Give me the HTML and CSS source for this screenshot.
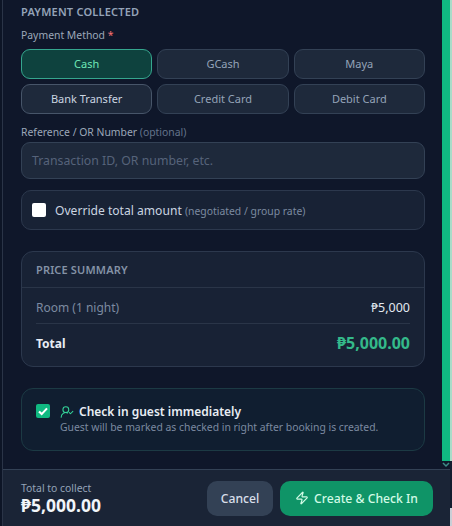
FILE: index.html
```html
<!DOCTYPE html>
<html lang="en">
<head>
<meta charset="utf-8">
<title>Payment</title>
<link rel="stylesheet" href="styles.css">
</head>
<body>
<div class="modal">
  <div class="body">
    <div class="scroll">
      <h3 class="section-title">PAYMENT COLLECTED</h3>
      <div class="label">Payment Method <span class="req">*</span></div>
      <div class="methods">
        <button class="method active">Cash</button>
        <button class="method">GCash</button>
        <button class="method">Maya</button>
        <button class="method strong">Bank Transfer</button>
        <button class="method">Credit Card</button>
        <button class="method">Debit Card</button>
      </div>
      <div class="label ref-label">Reference / OR Number <span class="opt">(optional)</span></div>
      <div class="input">Transaction ID, OR number, etc.</div>
      <div class="override">
        <span class="box"></span>
        <span class="override-text">Override total amount <small>(negotiated / group rate)</small></span>
      </div>
      <div class="summary">
        <div class="summary-head">PRICE SUMMARY</div>
        <div class="summary-body">
          <div class="row room"><span>Room (1 night)</span><span class="val">₱5,000</span></div>
          <div class="row total"><span>Total</span><span class="grand">₱5,000.00</span></div>
        </div>
      </div>
      <div class="checkin">
        <span class="check">
          <svg viewBox="0 0 14 14" width="14" height="14"><path d="M3 7.4l2.7 2.7L11 4.4" fill="none" stroke="#fff" stroke-width="2.1"/></svg>
        </span>
        <div class="checkin-text">
          <div class="checkin-title">
            <svg viewBox="0 0 24 24" width="14" height="14" fill="none" stroke="#34d399" stroke-width="1.8" stroke-linecap="round" stroke-linejoin="round"><path d="M2 21a8 8 0 0 1 11-7.4"/><circle cx="10" cy="8" r="5"/><path d="M16 13l2 2 4-4"/></svg>
            <span>Check in guest immediately</span>
          </div>
          <div class="checkin-sub">Guest will be marked as checked in right after booking is created.</div>
        </div>
      </div>
    </div>
    <div class="scrollbar">
      <div class="thumb"></div>
      <svg class="arrow" viewBox="0 0 8 6" width="8" height="6"><path d="M1 1l3 3 3-3" fill="none" stroke="#3f8a86" stroke-width="1.5"/></svg>
    </div>
  </div>
  <div class="footer">
    <div class="collect">
      <div class="collect-label">Total to collect</div>
      <div class="collect-amount">₱5,000.00</div>
    </div>
    <div class="actions">
      <button class="btn cancel">Cancel</button>
      <button class="btn create">
        <svg viewBox="0 0 24 24" width="14" height="14" fill="none" stroke="#d1fae5" stroke-width="2" stroke-linecap="round" stroke-linejoin="round"><path d="M4 14a1 1 0 0 1-.78-1.63l9.9-10.2a.5.5 0 0 1 .86.46l-1.92 6.02A1 1 0 0 0 13 10h7a1 1 0 0 1 .78 1.63l-9.9 10.2a.5.5 0 0 1-.86-.46l1.92-6.02A1 1 0 0 0 11 14z"/></svg>
        <span>Create &amp; Check In</span>
      </button>
    </div>
  </div>
</div>
<div class="edge">
  <div class="edge-top"></div>
  <div class="edge-mid"></div>
  <div class="edge-bottom"></div>
</div>
</body>
</html>
```
FILE: styles.css
```css
* { box-sizing: border-box; }
html, body { margin: 0; height: 526px; overflow: hidden; }
body {
  background: #0d1526;
  font-family: "Noto Sans", sans-serif;
  padding-left: 2px;
  display: flex;
}
.modal {
  flex: 1;
  min-width: 0;
  height: 526px;
  display: flex;
  flex-direction: column;
  border-left: 1px solid #2a3447;
  background: #0f172a;
}
.edge { width: 2px; flex: none; display: flex; flex-direction: column; }
.edge-top { height: 461px; background: #a9dcc9; }
.edge-mid { height: 47px; background: #141e30; }
.edge-bottom { flex: 1; background: #c9ced6; }
.body { display: flex; height: 469px; }
.scroll { flex: 1; padding: 0 17px 0 18px; min-width: 0; }
.section-title {
  margin: 4px 0 0;
  font-size: 11px;
  line-height: 15px;
  font-weight: 600;
  letter-spacing: .2px;
  color: #94a3b8;
}
.label { margin-top: 9px; font-size: 10.4px; line-height: 15px; color: #9ca8b9; }
.req { color: #f87171; }
.opt { color: #64748b; }
.methods {
  margin-top: 6px;
  display: grid;
  grid-template-columns: repeat(3, 1fr);
  gap: 5px;
}
.method {
  height: 30px;
  padding: 0 0 2px;
  border: 1px solid #334155;
  border-radius: 9px;
  background: #1e293b;
  color: #94a3b8;
  font: 11px "Noto Sans", sans-serif;
}
.method.active { background: #0e423e; border-color: #35a68e; color: #6ee7b7; }
.method.strong { border-color: #475569; color: #cbd5e1; }
.ref-label { margin-top: 11px; }
.input {
  margin-top: 2px;
  height: 37px;
  padding: 0 10px;
  display: flex;
  align-items: center;
  border: 1px solid #334155;
  border-radius: 9px;
  background: #1e293b;
  font-size: 12.3px;
  color: #56637a;
}
.override {
  margin-top: 11px;
  height: 40px;
  padding: 0 10px;
  display: flex;
  align-items: center;
  gap: 9px;
  border: 1px solid #2c384d;
  border-radius: 10px;
  background: #182235;
}
.box { width: 14px; height: 14px; background: #fff; border-radius: 2px; }
.override-text { font-size: 12.1px; color: #cbd5e1; }
.override-text small { font-size: 10.4px; color: #7c8aa0; }
.summary {
  margin-top: 21px;
  height: 116px;
  border: 1px solid #2c384d;
  border-radius: 12px;
  background: #182235;
}
.summary-head {
  height: 36px;
  padding: 0 14px;
  display: flex;
  align-items: center;
  border-bottom: 1px solid #2a3548;
  font-size: 11px;
  font-weight: 600;
  letter-spacing: .15px;
  color: #8492a6;
}
.summary-body { padding: 0 14px; }
.row { display: flex; justify-content: space-between; align-items: center; height: 36px; }
.room { padding-top: 3px; font-size: 12px; color: #7c8aa0; border-bottom: 1px solid #2a3548; }
.val { font-size: 12.5px; color: #e2e8f0; }
.total { height: 38px; font-size: 12px; font-weight: 700; color: #e8edf4; }
.grand { font-size: 16px; font-weight: 700; color: #34b98a; }
.checkin {
  margin-top: 21px;
  height: 63px;
  padding: 15px 14px 0;
  display: flex;
  gap: 10px;
  border: 1px solid #1c3a44;
  border-radius: 12px;
  background: #101e30;
}
.check {
  width: 14px;
  height: 14px;
  border-radius: 2px;
  background: #10b981;
  display: flex;
}
.checkin-text { min-width: 0; }
.checkin-title {
  display: flex;
  align-items: center;
  gap: 5px;
  font-size: 12px;
  line-height: 15px;
  font-weight: 600;
  color: #e8edf4;
}
.checkin-sub { margin-top: 1px; font-size: 10.4px; line-height: 15px; color: #7c8aa0; }
.scrollbar { width: 8px; flex: none; }
.thumb { height: 461px; background: #10b981; }
.arrow { display: block; margin-top: 1px; }
.footer {
  height: 57px;
  padding: 0 17px 0 18px;
  display: flex;
  justify-content: space-between;
  align-items: center;
  border-top: 1px solid #334155;
  background: #1a2436;
}
.collect-label { font-size: 10.4px; line-height: 14px; color: #94a3b8; }
.collect-amount { font-size: 17.5px; line-height: 21px; font-weight: 700; color: #f1f5f9; }
.actions { display: flex; gap: 7px; }
.btn {
  height: 35px;
  border: 0;
  border-radius: 10px;
  font: 500 12.2px "Noto Sans", sans-serif;
}
.cancel { width: 66px; background: #334155; color: #d7dee8; }
.create {
  width: 153px;
  background: #0f9467;
  color: #d1fae5;
  display: flex;
  align-items: center;
  justify-content: center;
  gap: 5px;
}
```
